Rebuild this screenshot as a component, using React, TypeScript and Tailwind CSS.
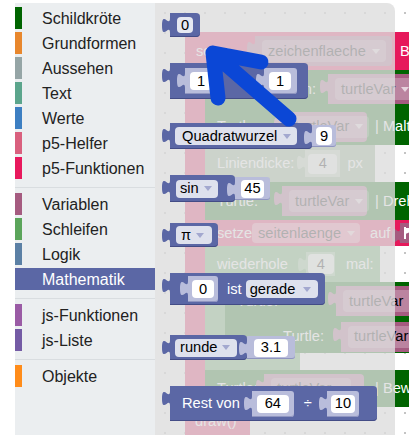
import React from "react";

const Tab = ({ fill }: { fill: string }) => (
  <svg className="absolute left-[-8px] top-[5px]" width="9" height="15" viewBox="0 0 9 15">
    <path d="M9,0 L8,0 C8,10 0,-8 0,7.5 S8,5 8,15 L9,15 Z" fill={fill} />
  </svg>
);

const Tri = ({ c = "#a3a8cf" }: { c?: string }) => (
  <svg width="8" height="5" viewBox="0 0 8 5" className="shrink-0">
    <path d="M0,0 L8,0 L4,5 Z" fill={c} />
  </svg>
);

const MBlock = ({ className = "", children }: { className?: string; children?: React.ReactNode }) => (
  <div className={"relative flex items-center bg-[#5b67a5] rounded-r-[4px] shadow-[inset_0_-1px_0_#434c86] " + className}>
    <Tab fill="#5b67a5" />
    {children}
  </div>
);

const Sh = ({ className = "", children }: { className?: string; children?: React.ReactNode }) => (
  <div className={"relative flex items-center bg-[#b9bddb] rounded-r-[3px] shadow-[inset_0_-1px_0_#8f95c0] " + className}>
    <Tab fill="#b9bddb" />
    {children}
  </div>
);

const NF = ({ w, children }: { w: string; children: React.ReactNode }) => (
  <span className={"flex items-center justify-center h-[18px] rounded-[4px] bg-white text-black " + w}>{children}</span>
);

const DD = ({ className = "", label }: { className?: string; label: string }) => (
  <span className={"flex items-center justify-between h-[18px] rounded-[4px] bg-white/80 text-black whitespace-nowrap " + className}>
    {label}
    <Tri />
  </span>
);

const WVar = ({ className = "", label }: { className?: string; label: string }) => (
  <div className={"relative flex items-center h-[30px] bg-[#a55b80] rounded-r-[4px] pl-[7px] " + className}>
    <Tab fill="#a55b80" />
    <span className="flex items-center gap-[6px] h-[22px] px-[6px] rounded-[4px] bg-white/25 text-black whitespace-nowrap">
      {label}
      <Tri c="#e6d3dd" />
    </span>
  </div>
);

const groups: [string, string][][] = [
  [
    ["Schildkröte", "bg-[#006400]"],
    ["Grundformen", "bg-[#e8872d]"],
    ["Aussehen", "bg-[#95a5a6]"],
    ["Text", "bg-[#5ba58c]"],
    ["Werte", "bg-[#3d7fc2]"],
    ["p5-Helfer", "bg-[#d9607e]"],
    ["p5-Funktionen", "bg-[#e8195d]"],
  ],
  [
    ["Variablen", "bg-[#a55b80]"],
    ["Schleifen", "bg-[#5ba55b]"],
    ["Logik", "bg-[#5b80a5]"],
    ["Mathematik", "bg-[#5b67a5]"],
  ],
  [
    ["js-Funktionen", "bg-[#9a5ba5]"],
    ["js-Liste", "bg-[#745ba5]"],
  ],
  [["Objekte", "bg-[#ff8c1a]"]],
];

function Toolbox() {
  return (
    <div className="w-[155px] h-full pl-[15px] shrink-0">
      <div className="mt-[3px] h-full bg-[#ebeef0] pt-[4px] flex flex-col">
        {groups.map((g, gi) => (
          <React.Fragment key={gi}>
            {gi > 0 && (
              <div className="h-[14px] pt-[8px]">
                <div className="h-px bg-[#d9dde0]" />
              </div>
            )}
            <div className="flex flex-col gap-[3px]">
              {g.map(([name, col]) => {
                const sel = name === "Mathematik";
                return (
                  <div key={name} className={"flex items-center h-[22px] " + (sel ? "bg-[#5b67a5]" : "")}>
                    <div className={"w-[7px] h-full " + col} />
                    <span className={"ml-[20px] pt-[1px] text-[16px] leading-none " + (sel ? "text-white" : "text-[#222]")}>{name}</span>
                  </div>
                );
              })}
            </div>
          </React.Fragment>
        ))}
      </div>
    </div>
  );
}

function Workspace() {
  return (
    <>
      {/* crimson top bar */}
      <div className="absolute left-[30px] top-[32px] w-[270px] h-[38px] bg-[#e6195b] rounded-tl-[6px] flex items-center text-white">
        <span className="ml-[11px]">setze</span>
        <WVar className="ml-[24px] w-[137px]" label="zeichenflaeche" />
        <span className="ml-[8px]">Bild</span>
      </div>
      {/* crimson stripe */}
      <div className="absolute left-[30px] top-[70px] w-[20px] h-[340px] bg-[#e6195b]" />
      {/* crimson bottom */}
      <div className="absolute left-[30px] top-[407px] w-[65px] h-[28px] bg-[#e6195b] rounded-tr-[4px] flex items-center text-white">
        <span className="ml-[10px]">draw()</span>
      </div>
      {/* row a */}
      <div className="absolute left-[50px] top-[70px] w-[260px] h-[38px] bg-[#006400] flex items-center text-white">
        <span className="ml-[13px] whitespace-nowrap">Turtle-Position:</span>
        <WVar className="ml-[12px] w-[100px]" label="turtleVar" />
      </div>
      {/* row b */}
      <div className="absolute left-[50px] top-[108px] w-[260px] h-[37px] bg-[#006400] flex items-center text-white">
        <span className="ml-[12px]">Turtle:</span>
        <WVar className="ml-[24px] w-[85px]" label="turtleVar" />
        <span className="ml-[8px] whitespace-nowrap">| Malt</span>
      </div>
      {/* row c */}
      <div className="absolute left-[50px] top-[145px] w-[170px] h-[37px] bg-[#86a882] flex items-center text-white">
        <span className="ml-[12px] whitespace-nowrap">Liniendicke:</span>
        <div className="relative ml-[11px] flex items-center h-[27px] w-[35px] bg-[#b9cdb6] pl-[3px]">
          <Tab fill="#b9cdb6" />
          <span className="flex items-center justify-center w-[29px] h-[20px] rounded-[4px] bg-white/70 text-black">4</span>
        </div>
        <span className="ml-[7px]">px</span>
      </div>
      {/* row d */}
      <div className="absolute left-[50px] top-[182px] w-[260px] h-[38px] bg-[#006400] flex items-center text-white">
        <span className="ml-[12px]">Turtle:</span>
        <WVar className="ml-[24px] w-[85px]" label="turtleVar" />
        <span className="ml-[8px] whitespace-nowrap">| Dreh</span>
      </div>
      {/* row e */}
      <div className="absolute left-[50px] top-[220px] w-[260px] h-[26px] bg-[#e6195b] flex items-center text-white">
        <span className="ml-[12px]">setze</span>
        <span className="flex items-center gap-[6px] h-[20px] w-[108px] px-[6px] rounded-[4px] bg-white/40 text-black">seitenlaenge<Tri c="#f3c5d3" /></span>
        <span className="ml-[10px]">auf</span>
        <div className="relative ml-[10px] flex items-center h-[20px] w-[30px] bg-[#a55b80] pl-[4px]">
          <Tab fill="#a55b80" />
          <svg width="10" height="12" viewBox="0 0 10 12"><path d="M1,0 L1,12 M1,1 L9,3 L1,6" stroke="white" strokeWidth="2" fill="white" /></svg>
        </div>
      </div>
      {/* row f loop */}
      <div className="absolute left-[50px] top-[246px] w-[175px] h-[36px] bg-[#5ba55b] flex items-center text-white">
        <span className="ml-[12px]">wiederhole</span>
        <div className="relative ml-[18px] flex items-center h-[24px] w-[29px] bg-[#8fc28f] pl-[2px]">
          <Tab fill="#8fc28f" />
          <span className="flex items-center justify-center w-[26px] h-[20px] rounded-[4px] bg-white/80 text-black">4</span>
        </div>
        <span className="ml-[11px]">mal:</span>
      </div>
      <div className="absolute left-[50px] top-[282px] w-[20px] h-[71px] bg-[#5ba55b]" />
      {/* h1 */}
      <div className="absolute left-[70px] top-[282px] w-[240px] h-[38px] bg-[#006400] flex items-center text-white">
        <span className="ml-[12px]">Turtle:</span>
        <WVar className="ml-[58px] w-[90px]" label="turtleVar" />
      </div>
      {/* h2 */}
      <div className="absolute left-[70px] top-[320px] w-[240px] h-[33px] bg-[#006400] flex items-center text-white">
        <span className="ml-[58px]">Turtle:</span>
        <WVar className="ml-[17px] w-[90px]" label="turtleVar" />
      </div>
      {/* i */}
      <div className="absolute left-[50px] top-[353px] w-[95px] h-[17px] bg-[#5ba55b]" />
      {/* j */}
      <div className="absolute left-[50px] top-[370px] w-[260px] h-[37px] bg-[#006400] flex items-center text-white">
        <span className="ml-[12px]">Turtle:</span>
        <WVar className="ml-[6px] w-[100px]" label="turtleVar" />
        <span className="ml-[11px] whitespace-nowrap">| Bewege</span>
      </div>
    </>
  );
}

function Flyout() {
  return (
    <div className="absolute left-0 top-[3px] bottom-0 w-[240px] bg-[rgba(221,221,221,0.8)] rounded-tr-[8px]">
      <div className="flex flex-col items-start pl-[15px] text-[14.67px] leading-none">
        {/* 0 */}
        <MBlock className="mt-[10px] h-[24px] px-[7px]">
          <span className="flex items-center justify-center h-[16px] w-[16px] rounded-[4px] bg-white/85 text-black">0</span>
        </MBlock>
        {/* 1 (op) 1 */}
        <MBlock className="mt-[26px] h-[36px] pl-[15px] pr-[11px]">
          <Sh className="h-[26px] w-[32px] pl-[5px]">
            <NF w="w-[22px]">1</NF>
          </Sh>
          <div className="ml-[9px] w-[26px] h-[18px]" />
          <Sh className="ml-[12px] h-[26px] w-[33px] pl-[5px]">
            <NF w="w-[22px]">1</NF>
          </Sh>
        </MBlock>
        {/* Quadratwurzel */}
        <div className="mt-[24px] flex items-center">
          <MBlock className="h-[26px] w-[142px] pl-[5px]">
            <DD className="w-[122px] pl-[7px] pr-[6px]" label="Quadratwurzel" />
          </MBlock>
          <Sh className="h-[22px] w-[24px] pl-[4px]">
            <NF w="w-[16px]">9</NF>
          </Sh>
        </div>
        {/* sin */}
        <div className="mt-[26px] flex items-center">
          <MBlock className="h-[27px] w-[65px] pl-[6px]">
            <DD className="w-[42px] pl-[4px] pr-[6px]" label="sin" />
          </MBlock>
          <Sh className="h-[23px] w-[35px] pl-[6px]">
            <NF w="w-[23px]">45</NF>
          </Sh>
        </div>
        {/* pi */}
        <MBlock className="mt-[21px] h-[24px] w-[48px] pl-[6px]">
          <DD className="w-[36px] pl-[5px] pr-[8px]" label="π" />
        </MBlock>
        {/* ist gerade */}
        <MBlock className="mt-[26px] h-[32px] w-[155px] pl-[18px]">
          <Sh className="h-[26px] w-[30px] pl-[4px]">
            <NF w="w-[22px]">0</NF>
          </Sh>
          <span className="ml-[9px] text-white">ist</span>
          <DD className="ml-[4px] w-[72px] pl-[4px] pr-[7px]" label="gerade" />
        </MBlock>
        {/* runde */}
        <div className="mt-[30px] flex items-center">
          <MBlock className="h-[25px] w-[77px] pl-[5px]">
            <DD className="w-[62px] pl-[5px] pr-[7px]" label="runde" />
          </MBlock>
          <Sh className="h-[23px] w-[48px] pl-[7px]">
            <NF w="w-[34px]">3.1</NF>
          </Sh>
        </div>
        {/* Rest von */}
        <MBlock className="mt-[26px] h-[35px] w-[207px] pl-[12px]">
          <span className="text-white whitespace-nowrap">Rest von</span>
          <Sh className="ml-[12px] h-[26px] w-[42px] pl-[5px]">
            <NF w="w-[32px]">64</NF>
          </Sh>
          <span className="ml-[10px] text-white">÷</span>
          <Sh className="ml-[15px] h-[26px] w-[32px] pl-[4px]">
            <NF w="w-[24px]">10</NF>
          </Sh>
        </MBlock>
      </div>
    </div>
  );
}

export default function App() {
  return (
    <div className="relative w-[409px] h-[435px] overflow-hidden bg-white font-['Liberation_Sans',Arial,sans-serif] text-[14.67px] leading-none">
      <div className="flex h-full">
        <Toolbox />
        <div className="relative flex-1 h-full [background-image:radial-gradient(circle,#c4c4c4_1px,transparent_1.5px)] [background-size:20px_20px] [background-position:0_3px]">
          <Workspace />
          <Flyout />
        </div>
      </div>
      <svg className="absolute left-0 top-0 pointer-events-none" width="409" height="435" viewBox="0 0 409 435">
        <path
          d="M289,119 L213,53 M213,53 L261,62 M213,53 L218,98"
          stroke="#0b47d6"
          strokeWidth="15"
          strokeLinecap="round"
          strokeLinejoin="round"
          fill="none"
        />
      </svg>
    </div>
  );
}
